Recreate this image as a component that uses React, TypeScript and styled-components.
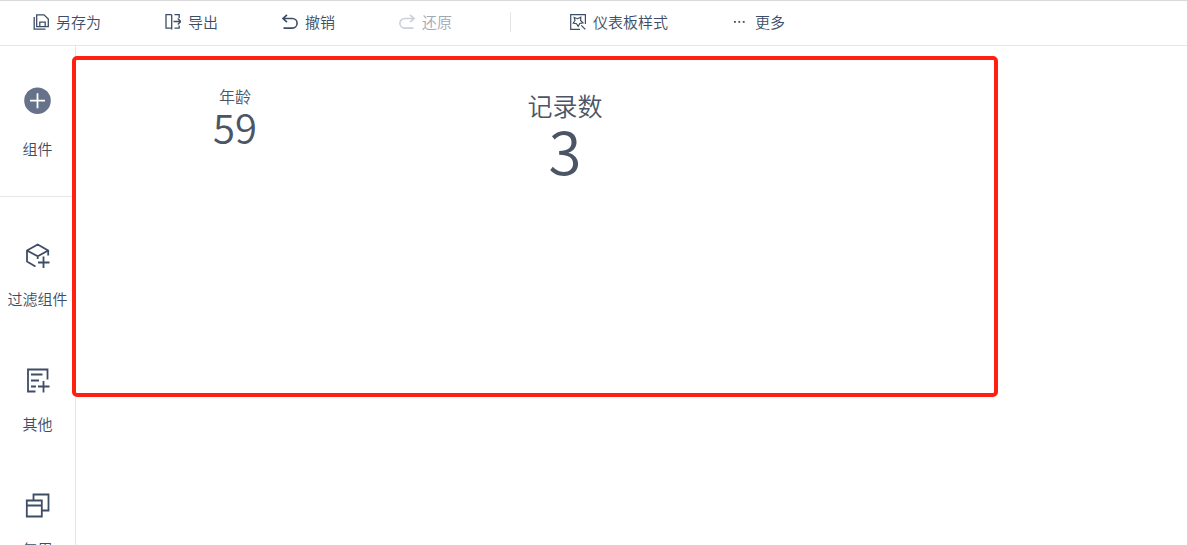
import React from 'react';
import styled, { createGlobalStyle } from 'styled-components';

const GlobalStyle = createGlobalStyle`
  * { box-sizing: border-box; }
  body {
    margin: 0;
    background: #fff;
    color: #3d4d66;
    font-family: "Noto Sans CJK SC", sans-serif;
    font-size: 15px;
    font-weight: 350;
    line-height: 20px;
  }
`;

const Page = styled.div`
  display: flex;
  flex-direction: column;
  height: 100vh;
  overflow: hidden;
`;

const Toolbar = styled.header`
  display: flex;
  flex: none;
  align-items: center;
  gap: 64px;
  height: 46px;
  padding: 0 33px 2px;
  border-top: 1px solid #d9d9d9;
  border-bottom: 1px solid #e6e7ea;
`;

const ToolButton = styled.button`
  display: flex;
  flex: none;
  align-items: center;
  gap: 7px;
  padding: 0;
  border: 0;
  background: none;
  color: #3d4d66;
  font: inherit;
  white-space: nowrap;
  cursor: pointer;

  &:disabled {
    color: #a0a8b6;
    cursor: default;
  }
  &:disabled svg {
    color: #ccd0d8;
  }
`;

const Separator = styled.span`
  flex: none;
  width: 1px;
  height: 20px;
  margin: 0 -5px 0 -6px;
  background: #e3e5e9;
`;

const Body = styled.div`
  display: flex;
  flex: 1;
  min-height: 0;
`;

const Sidebar = styled.nav`
  flex: none;
  width: 76px;
  border-right: 1px solid #e6e7ea;
`;

const SideGroup = styled.div`
  display: flex;
  flex-direction: column;
  gap: 59px;
  padding: 41px 0 37px;

  & + & {
    border-top: 1px solid #e6e7ea;
    padding-top: 46px;
  }
`;

const SideButton = styled.button<{ $gap: number }>`
  display: flex;
  flex-direction: column;
  align-items: center;
  gap: ${({ $gap }) => $gap}px;
  width: 100%;
  padding: 0;
  border: 0;
  background: none;
  color: #3d4d66;
  font: inherit;
  white-space: nowrap;
  cursor: pointer;
`;

const Canvas = styled.main`
  flex: 1;
  min-width: 0;
  padding: 10px 189px 0 0;
`;

const Frame = styled.section`
  position: relative;
  display: grid;
  grid-template-columns: 318px 342px;
  align-items: start;
  min-height: 341px;
  margin-left: -4px;
  border: 4px solid #ff2012;
  border-radius: 5px;
`;

const Metric = styled.div<{ $large?: boolean }>`
  display: flex;
  flex-direction: column;
  align-items: center;
  padding-top: ${({ $large }) => ($large ? 27 : 24)}px;
  color: #4b5565;
`;

const MetricName = styled.span<{ $large?: boolean }>`
  font-size: ${({ $large }) => ($large ? 25 : 16)}px;
  line-height: ${({ $large }) => ($large ? 36 : 24)}px;
`;

const MetricValue = styled.span<{ $large?: boolean }>`
  font-size: ${({ $large }) => ($large ? 60 : 40)}px;
  line-height: ${({ $large }) => ($large ? 52 : 36)}px;
`;

type IconProps = { size: number; width?: number; children: React.ReactNode };

const Icon = ({ size, width = 1.3, children }: IconProps) => (
  <svg
    width={size}
    height={size}
    viewBox={`0 0 ${size} ${size}`}
    fill="none"
    stroke="currentColor"
    strokeWidth={width}
    aria-hidden="true"
  >
    {children}
  </svg>
);

const SaveAsIcon = () => (
  <Icon size={16}>
    <path d="M3.7 .8H11L15.3 5V12.7H3.7Z" />
    <path d="M6.8 12.7V8.2H12.2V12.7" />
    <path d="M1.2 3V15.2H12.5" />
  </Icon>
);

const ExportIcon = () => (
  <Icon size={16}>
    <path d="M6.7 .7H1V14.2H6.7V.7M6.7 14.2V15.5" />
    <path d="M9.5 .7H14.2V4M9.5 14.2H14.2V11.5M8.5 7.5H16M12.8 4.5L15.8 7.5L12.8 10.5" />
  </Icon>
);

const UndoIcon = () => (
  <Icon size={16} width={1.6}>
    <path d="M5 .8L1 4.5L5 8.2M1 4.5H10.3A4.8 4.8 0 0 1 10.3 14.1H1.5" />
  </Icon>
);

const RedoIcon = () => (
  <Icon size={16} width={1.6}>
    <path d="M11 .8L15 4.5L11 8.2M15 4.5H5.7A4.8 4.8 0 0 0 5.7 14.1H14.5" />
  </Icon>
);

const StyleIcon = () => (
  <Icon size={16} width={1.2}>
    <path d="M15.4 10V.7H.7V15.3H10" />
    <path d="M4.2 3.5L7.5 4.7L10.8 3.2L10.6 6.4L13 8.8L9.8 9.5L8.2 12.3L6.5 9.7L3.2 9L5 6.5Z" />
    <path d="M11.3 11.3L15.3 15.3" />
  </Icon>
);

const MoreIcon = () => (
  <svg width="16" height="16" viewBox="0 0 16 16" fill="currentColor" aria-hidden="true">
    <rect x="2" y="7" width="1.8" height="1.8" />
    <rect x="6.4" y="7" width="1.8" height="1.8" />
    <rect x="10.8" y="7" width="1.8" height="1.8" />
  </svg>
);

const AddIcon = () => (
  <svg width="27" height="28" viewBox="0 0 27 28" aria-hidden="true">
    <circle cx="13.5" cy="13.7" r="13.3" fill="#65728a" />
    <path d="M13.5 6.2V21.2M6 13.7H21" stroke="#fff" strokeWidth="1.8" />
  </svg>
);

const FilterIcon = () => (
  <Icon size={27} width={1.8}>
    <path d="M11.5 23.5L3 18.5V7.5L13.7 1.5L24.2 7.5V12.5M3 7.5L13.7 13.3L24.2 7.5M13.7 13.3V16" />
    <path d="M19.5 13.5V25M14 19.5H25.5" />
  </Icon>
);

const OtherIcon = () => (
  <Icon size={27} width={1.8}>
    <path d="M11.5 23.5H4V1.5H23.5V11.5M7 6.5H18.5M7 12.5H15M7 18.5H12" />
    <path d="M19.5 13V24.5M14 18.5H25.5" />
  </Icon>
);

const ReuseIcon = () => (
  <Icon size={27} width={1.8}>
    <path d="M9.5 7.5V1.5H24.5V17.5H18M2.8 7.5H17.8V23.5H2.8ZM2.8 12.5H17.8" />
  </Icon>
);

const App = () => (
  <>
    <GlobalStyle />
    <Page>
      <Toolbar>
        <ToolButton><SaveAsIcon />另存为</ToolButton>
        <ToolButton><ExportIcon />导出</ToolButton>
        <ToolButton><UndoIcon />撤销</ToolButton>
        <ToolButton disabled><RedoIcon />还原</ToolButton>
        <Separator />
        <ToolButton><StyleIcon />仪表板样式</ToolButton>
        <ToolButton><MoreIcon />更多</ToolButton>
      </Toolbar>
      <Body>
        <Sidebar>
          <SideGroup>
            <SideButton $gap={24}><AddIcon />组件</SideButton>
          </SideGroup>
          <SideGroup>
            <SideButton $gap={19}><FilterIcon />过滤组件</SideButton>
            <SideButton $gap={19}><OtherIcon />其他</SideButton>
            <SideButton $gap={19}><ReuseIcon />复用</SideButton>
          </SideGroup>
        </Sidebar>
        <Canvas>
          <Frame>
            <Metric>
              <MetricName>年龄</MetricName>
              <MetricValue>59</MetricValue>
            </Metric>
            <Metric $large>
              <MetricName $large>记录数</MetricName>
              <MetricValue $large>3</MetricValue>
            </Metric>
          </Frame>
        </Canvas>
      </Body>
    </Page>
  </>
);

export default App;
